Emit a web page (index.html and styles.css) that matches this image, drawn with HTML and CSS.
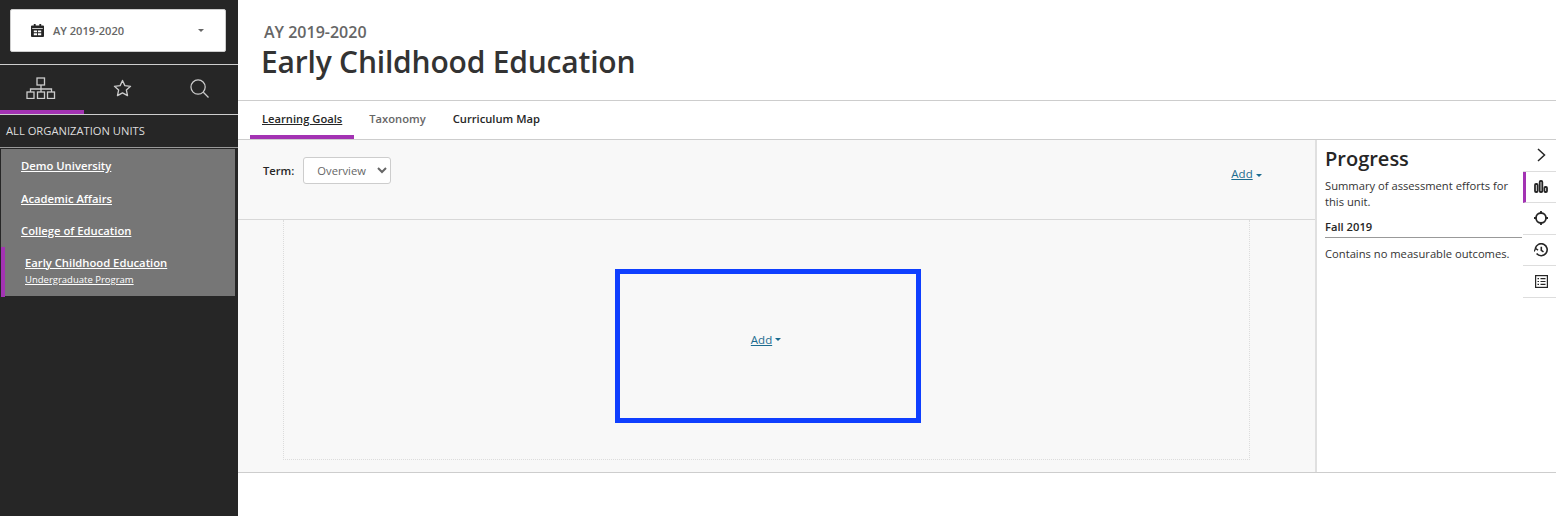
FILE: index.html
```html
<!DOCTYPE html>
<html lang="en">
<head>
    <meta charset="UTF-8">
    <title>Early Childhood Education</title>
    <link rel="stylesheet" href="styles.css">
</head>
<body>
    <aside class="sidebar">
        <div class="year-wrap">
            <button class="year-btn">
                <svg class="cal-icon" width="13" height="13" viewBox="0 0 14 14"><path fill="#262626" d="M3 0h2v1.500h4V0h2v1.500h2a1 1 0 0 1 1 1V13a1 1 0 0 1-1 1H1a1 1 0 0 1-1-1V2.500a1 1 0 0 1 1-1h2zM1.300 4.500v1h11.400v-1zM3 7v2h3.500V7zm4.500 0v2H11V7zM3 10v2h3.500v-2zm4.500 0v2H11v-2z" fill-rule="evenodd"/></svg>
                <span class="year-text">AY 2019-2020</span>
                <span class="caret year-caret"></span>
            </button>
        </div>
        <div class="side-tabs">
            <a href="#" class="side-tab active">
                <svg width="30" height="22" viewBox="0 0 30 22" fill="none" stroke="#ccc" stroke-width="1.300"><rect x="11" y="1" width="7.500" height="7"/><path d="M15 8v4M4.500 15v-3h21v3M15 12v3"/><rect x="1" y="15" width="7" height="6.500"/><rect x="11.500" y="15" width="7" height="6.500"/><rect x="21.500" y="15" width="7" height="6.500"/></svg>
            </a>
            <a href="#" class="side-tab">
                <svg width="19" height="18" viewBox="0 0 20 19" fill="none" stroke="#ccc" stroke-width="1.400" stroke-linejoin="round"><path d="M10 1.500l2.500 5.500 6 .7-4.400 4 1.200 5.900-5.300-3-5.300 3 1.200-5.900-4.400-4 6-.7z"/></svg>
            </a>
            <a href="#" class="side-tab">
                <svg width="19" height="19" viewBox="0 0 20 20" fill="none" stroke="#ccc" stroke-width="1.300"><circle cx="8.500" cy="8.500" r="7.500"/><path d="M14 14l5.500 5.500"/></svg>
            </a>
        </div>
        <div class="units-title">ALL ORGANIZATION UNITS</div>
        <ul class="unit-list">
            <li><a href="#">Demo University</a></li>
            <li><a href="#">Academic Affairs</a></li>
            <li><a href="#">College of Education</a></li>
            <li class="current">
                <a href="#">Early Childhood Education</a>
                <a href="#" class="unit-sub">Undergraduate Program</a>
            </li>
        </ul>
    </aside>
    <main class="main">
        <header class="page-head">
            <div class="page-year">AY 2019-2020</div>
            <h1>Early Childhood Education</h1>
        </header>
        <nav class="tabs">
            <a href="#" class="tab active">Learning Goals</a>
            <a href="#" class="tab muted">Taxonomy</a>
            <a href="#" class="tab">Curriculum Map</a>
        </nav>
        <div class="work">
            <section class="goals">
                <div class="toolbar">
                    <label class="term-label" for="term">Term:</label>
                    <select class="term-select" id="term"><option>Overview</option></select>
                    <a href="#" class="add add-top">Add</a><span class="caret add-caret"></span>
                </div>
                <div class="goals-body">
                    <div class="empty-box">
                        <div class="highlight">
                            <a href="#" class="add">Add</a><span class="caret add-caret"></span>
                        </div>
                    </div>
                </div>
            </section>
            <section class="progress">
                <h2>Progress</h2>
                <p>Summary of assessment efforts for this unit.</p>
                <h3>Fall 2019</h3>
                <p class="none">Contains no measurable outcomes.</p>
            </section>
            <div class="rail">
                <a href="#" class="rail-btn">
                    <svg width="10" height="14" viewBox="0 0 10 14" fill="none" stroke="#262626" stroke-width="1.500"><path d="M2 1l6.500 6L2 13"/></svg>
                </a>
                <a href="#" class="rail-btn active">
                    <svg width="14" height="13" viewBox="0 0 14 13" fill="none" stroke="#262626" stroke-width="1.800"><rect x="1" y="4" width="2.600" height="8" rx="1"/><rect x="5.700" y="1" width="2.600" height="11" rx="1"/><rect x="10.400" y="7" width="2.600" height="5" rx="1"/></svg>
                </a>
                <a href="#" class="rail-btn">
                    <svg width="14" height="14" viewBox="0 0 14 14" fill="none" stroke="#262626" stroke-width="1.800"><circle cx="7" cy="7" r="5"/><path d="M7 0v2M7 12v2M0 7h2M12 7h2"/></svg>
                </a>
                <a href="#" class="rail-btn">
                    <svg width="14" height="14" viewBox="0 0 14 14" fill="none" stroke="#262626" stroke-width="1.600"><path d="M2.600 10.600A6 6 0 1 0 1.300 5.500"/><path d="M7.300 3.800v3.500l2.200 1.500"/><path d="M.2 8.500l1.300-3 2.600 1.600" stroke-width="1.300"/></svg>
                </a>
                <a href="#" class="rail-btn">
                    <svg width="13" height="13" viewBox="0 0 13 13" fill="none" stroke="#262626" stroke-width="1.200"><rect x=".6" y=".6" width="11.800" height="11.800"/><path d="M2.500 3.700h1.500M5.500 3.700h5M2.500 6.500h1.500M5.500 6.500h5M2.500 9.300h1.500M5.500 9.300h5"/></svg>
                </a>
            </div>
        </div>
    </main>
</body>
</html>
```
FILE: styles.css
```css
* {
    box-sizing: border-box;
}
html, body {
    height: 100%;
}
body {
    margin: 0;
    display: flex;
    font-family: "Open Sans", sans-serif;
    color: #262626;
    background-color: #fff;
    overflow: hidden;
}
a {
    color: inherit;
}

/* sidebar */
.sidebar {
    width: 238px;
    flex-shrink: 0;
    background-color: #262626;
    color: #fff;
}
.year-wrap {
    height: 65px;
    padding: 9px 12px 0 10px;
    border-bottom: 1px solid #cdcdcd;
}
.year-btn {
    width: 216px;
    height: 43px;
    display: flex;
    align-items: center;
    padding: 0 21px 0 20px;
    background-color: #fff;
    border: 1px solid #cdcdcd;
    border-radius: 2px;
    font-family: inherit;
}
.year-text {
    margin-left: 9px;
    font-size: 11.100px;
    font-weight: 600;
    color: #666;
}
.caret {
    display: inline-block;
    width: 0;
    height: 0;
    border-left: 3px solid transparent;
    border-right: 3px solid transparent;
    border-top: 3px solid #666;
}
.year-caret {
    margin-left: auto;
}
.side-tabs {
    display: flex;
    height: 50px;
    border-bottom: 1px solid #cdcdcd;
}
.side-tab {
    width: 77px;
    flex-shrink: 0;
    display: flex;
    align-items: center;
    justify-content: center;
    padding-bottom: 3px;
}
.side-tab.active {
    width: 84px;
    padding: 1px 2px 0 0;
    border-bottom: 4px solid #a333b3;
}
.units-title {
    height: 33px;
    padding: 8px 6px 0;
    font-size: 11.200px;
    line-height: 16px;
    color: #ddd;
    border-bottom: 1px solid #999;
}
.unit-list {
    list-style: none;
    width: 234px;
    margin: 1px 0 0 1px;
    padding: 0;
    height: 147px;
    background-color: #767676;
    font-size: 11.250px;
    font-weight: 600;
}
.unit-list li {
    height: 32.500px;
    padding: 9px 0 0 20px;
    line-height: 16px;
}
.unit-list .current {
    height: 50px;
    padding: 8px 0 0 20px;
    border-left: 4px solid #a333b3;
}
.unit-sub {
    display: block;
    font-size: 9.500px;
    font-weight: 400;
    line-height: 18px;
}

/* main column */
.main {
    flex: 1;
    min-width: 0;
    display: flex;
    flex-direction: column;
}
.page-head {
    height: 101px;
    padding: 21px 0 0 23px;
    border-bottom: 1px solid #cdcdcd;
}
.page-year {
    margin-left: 3px;
    font-size: 16px;
    font-weight: 600;
    line-height: 22px;
    color: #666;
}
h1 {
    margin: 0;
    font-size: 30px;
    font-weight: 600;
    letter-spacing: -0.200px;
    line-height: 38px;
    color: #333;
}
.tabs {
    display: flex;
    height: 39px;
    padding-left: 12px;
    border-bottom: 1px solid #cdcdcd;
}
.tab {
    padding: 10px 12px 0;
    font-size: 11.200px;
    font-weight: 600;
    line-height: 16px;
    text-decoration: none;
}
.tab.active {
    height: 38px;
    margin-right: 3px;
    text-decoration: underline;
    border-bottom: 4px solid #a333b3;
}
.tab.muted {
    margin-right: 3px;
    color: #666;
}

/* work area */
.work {
    height: 333px;
    display: flex;
    border-bottom: 1px solid #cdcdcd;
}
.goals {
    width: 1079px;
    background-color: #f8f8f8;
    border-right: 2px solid #e0e0e0;
}
.toolbar {
    height: 80px;
    display: flex;
    align-items: flex-start;
    padding: 17px 0 0 25px;
    border-bottom: 1px solid #d8d8d8;
}
.term-label {
    margin-top: 6px;
    font-size: 11.200px;
    font-weight: 600;
    line-height: 16px;
}
.term-select {
    width: 88px;
    height: 27px;
    margin-left: 9px;
    padding-left: 9px;
    font-family: inherit;
    font-size: 11.200px;
    color: #666;
    background-color: #fff;
    border: 1px solid #cdcdcd;
    border-radius: 3px;
}
.add {
    font-size: 11.500px;
    color: #1b6b8f;
}
.add-top {
    margin-left: 840px;
    margin-top: 9px;
    line-height: 16px;
}
.add-caret {
    margin-left: 3px;
    border-top-color: #1b6b8f;
}
.toolbar .add-caret {
    margin-top: 17px;
}
.goals-body {
    height: 252px;
    padding: 0 0 0 45px;
}
.empty-box {
    width: 967px;
    height: 240px;
    padding: 49px 0 0 331px;
    border: 1px dotted #dcdcdc;
    border-top: 0;
}
.highlight {
    width: 306px;
    height: 154px;
    display: flex;
    align-items: center;
    justify-content: center;
    padding: 0 4px 13px 0;
    border: 5px solid #0f3fff;
}

/* progress panel */
.progress {
    width: 205px;
    padding: 5px 0 0 8px;
    font-size: 11.200px;
    line-height: 16px;
    color: #333;
}
.progress h2 {
    margin: 0 0 6px;
    font-size: 20px;
    font-weight: 600;
    line-height: 27px;
    color: #262626;
}
.progress p {
    margin: 0;
    padding-right: 4px;
}
.progress h3 {
    margin: 9px 0 0;
    padding-bottom: 2px;
    font-size: 11.200px;
    font-weight: 600;
    line-height: 16px;
    color: #262626;
    border-bottom: 1px solid #999;
}
.progress .none {
    margin-top: 8px;
}
.rail {
    width: 33px;
    margin-left: 1px;
}
.rail-btn {
    height: 31.600px;
    display: flex;
    align-items: center;
    justify-content: center;
    padding-left: 3px;
    border-bottom: 1px solid #ddd;
}
.rail-btn.active {
    padding-left: 0;
    border-left: 3px solid #a333b3;
}
```
